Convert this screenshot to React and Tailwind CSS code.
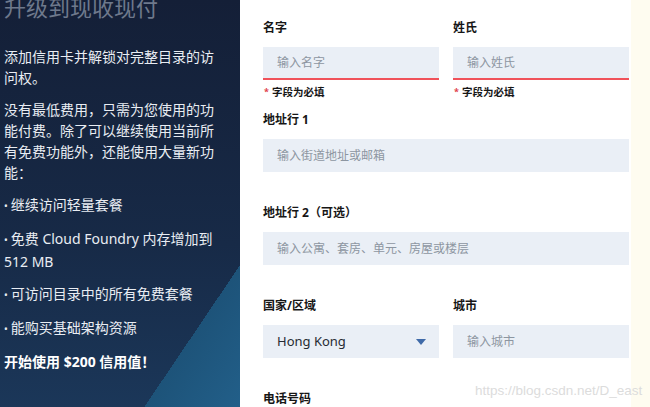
import { useState } from 'react'

const perks = [
  ['继续访问轻量套餐'],
  ['免费 Cloud Foundry 内存增加到 512 MB'],
  ['可访问目录中的所有免费套餐'],
  ['能购买基础架构资源'],
]

function Field({ label, placeholder, error, className = '' }) {
  return (
    <div className={className}>
      <div className="h-4 text-[12px] font-bold leading-4 text-[#161616]">{label}</div>
      <div
        className={`mt-[11px] flex h-[33px] items-center bg-[#eaeff6] px-[14px] text-[12px] text-[#8d96a1] ${
          error ? 'border-b-2 border-[#f0525a]' : ''
        }`}
      >
        {placeholder}
      </div>
      {error && (
        <div className="mt-[5px] flex h-[14px] items-center text-[10.5px] font-bold leading-[14px] text-[#161616]">
          <span className="mr-[3px] ml-px text-[9px] text-[#e0404a]">*</span>
          字段为必填
        </div>
      )}
    </div>
  )
}

function CountrySelect() {
  const [country] = useState('Hong Kong')
  return (
    <div className="w-[176px]">
      <div className="h-4 text-[12px] font-bold leading-4 text-[#161616]">国家/区域</div>
      <div className="mt-[11px] flex h-[33px] items-center justify-between bg-[#eaeff6] pr-[13px] pl-[14px] text-[13px] text-[#262b33]">
        <span>{country}</span>
        <svg width="10" height="6" viewBox="0 0 10 6">
          <path d="M0 0h10L5 6z" fill="#3f6aa8" />
        </svg>
      </div>
    </div>
  )
}

export default function App() {
  return (
    <div className="relative flex h-[407px] w-[650px] overflow-hidden bg-white font-['Noto_Sans','Noto_Sans_CJK_SC',sans-serif]">
      {/* Left promo panel */}
      <aside className="w-[240px] shrink-0 bg-[linear-gradient(124deg,transparent_81.4%,#1d5379_81.4%,#225f89),linear-gradient(180deg,#141f37,#172a47_60%,#1b3759)] pr-[20px] pl-[4px]">
        <h1 className="mt-[-7px] text-[22px] leading-[28px] text-[#6e798c]">升级到现收现付</h1>
        <div className="mt-[25px] flex flex-col gap-[11px] text-[14px] leading-[21px] text-[#e9edf3]">
          <p>添加信用卡并解锁对完整目录的访问权。</p>
          <p>没有最低费用，只需为您使用的功能付费。除了可以继续使用当前所有免费功能外，还能使用大量新功能：</p>
          {perks.map(([text]) => (
            <p key={text}>
              <span className="mr-[3px] text-[10px]">•</span>
              {text}
            </p>
          ))}
          <p className="font-bold text-white">开始使用 $200 信用值！</p>
        </div>
      </aside>

      {/* Form */}
      <main className="w-[391px] shrink-0 pt-5 pl-[23px]">
        <div className="flex gap-[14px]">
          <Field label="名字" placeholder="输入名字" error className="w-[176px]" />
          <Field label="姓氏" placeholder="输入姓氏" error className="w-[176px]" />
        </div>
        <Field label="地址行 1" placeholder="输入街道地址或邮箱" className="mt-[13px] w-[366px]" />
        <Field label="地址行 2（可选）" placeholder="输入公寓、套房、单元、房屋或楼层" className="mt-[33px] w-[366px]" />
        <div className="mt-[33px] flex gap-[14px]">
          <CountrySelect />
          <Field label="城市" placeholder="输入城市" className="w-[176px]" />
        </div>
        <div className="mt-[33px] h-4 text-[12px] font-bold leading-4 text-[#161616]">电话号码</div>
      </main>

      <div className="flex-1 bg-[#fefcf0]" />

      {/* watermark */}
      <div className="absolute top-[383px] left-[475px] font-['Liberation_Sans',sans-serif] text-[13.5px] leading-4 text-[#dcdcdc]">
        https://blog.csdn.net/D_east
      </div>
    </div>
  )
}
